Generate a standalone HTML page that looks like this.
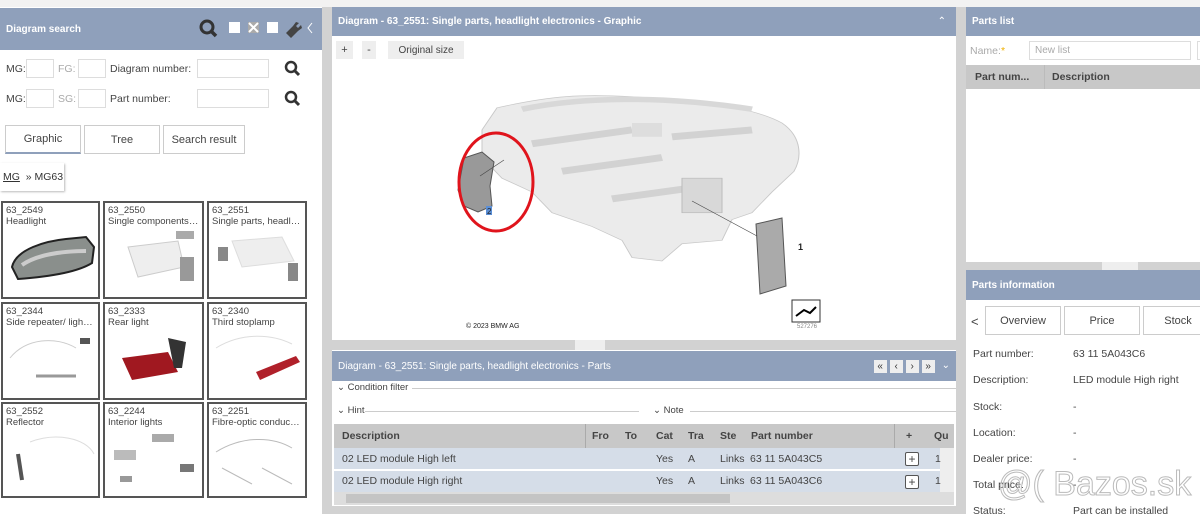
<!DOCTYPE html>
<html><head><meta charset="utf-8"><style>
*{box-sizing:border-box;margin:0;padding:0}
body{width:1200px;height:514px;overflow:hidden;background:#fff;font-family:"Liberation Sans",sans-serif;font-size:11px;color:#333;position:relative}
.a{position:absolute}
.hdr{background:#8fa0bb;color:#fff;font-weight:bold;font-size:10px;padding-left:6px;display:flex;align-items:center;white-space:nowrap}
.gut{background:#d2d2d2}
.inp{position:absolute;border:1px solid #ddd;background:#fff;height:19px}
.btn{position:absolute;border:1px solid #ccc;background:#fff;display:flex;align-items:center;justify-content:center;font-size:11px;color:#444;white-space:nowrap}
.th{position:absolute;border:2px solid #555;background:#fff;font-size:9.5px;color:#444;padding:2px 3px;line-height:11px;overflow:hidden;white-space:nowrap;text-overflow:ellipsis}
.lbl{position:absolute;font-size:10.5px;color:#444;white-space:nowrap}
</style></head><body>
<div class="a gut" style="left:322px;top:7px;width:10px;height:507px"></div>
<div class="a gut" style="left:956px;top:7px;width:10px;height:507px"></div>
<div class="a" style="left:0;top:0;width:1200px;height:7px;background:#f2f2f2"></div>

<!-- LEFT -->
<div class="a hdr" style="left:0;top:8px;width:322px;height:42px">Diagram search</div>
<svg class="a" style="left:198px;top:18px" width="120" height="22">
<circle cx="9" cy="9" r="6" fill="none" stroke="#333" stroke-width="3"/><line x1="13" y1="13" x2="18" y2="18" stroke="#333" stroke-width="3.5"/>
<rect x="31" y="4" width="11" height="11" fill="#fff"/>
<rect x="50" y="4" width="11" height="11" fill="#aaa"/><path d="M51 5l9 9M60 5l-9 9" stroke="#fff" stroke-width="2"/>
<rect x="69" y="4" width="11" height="11" fill="#fff"/>
<path d="M88 15l7-7 3-4 3 1-3 3 2 2 3-3 1 3-4 3-7 7z" fill="#444"/>
<path d="M114 5l-4 5 4 5" stroke="#fff" fill="none" stroke-width="1"/>
</svg>
<div class="lbl" style="left:6px;top:63px">MG:</div><div class="inp" style="left:26px;top:59px;width:28px"></div>
<div class="lbl" style="left:58px;top:63px;color:#aaa">FG:</div><div class="inp" style="left:78px;top:59px;width:28px"></div>
<div class="lbl" style="left:110px;top:63px">Diagram number:</div><div class="inp" style="left:197px;top:59px;width:72px"></div>
<div class="lbl" style="left:6px;top:93px">MG:</div><div class="inp" style="left:26px;top:89px;width:28px"></div>
<div class="lbl" style="left:58px;top:93px;color:#aaa">SG:</div><div class="inp" style="left:78px;top:89px;width:28px"></div>
<div class="lbl" style="left:110px;top:93px">Part number:</div><div class="inp" style="left:197px;top:89px;width:72px"></div>
<svg class="a" style="left:284px;top:60px" width="20" height="50"><g stroke="#333" fill="none"><circle cx="7" cy="7" r="5" stroke-width="2.5"/><line x1="10" y1="10" x2="15" y2="15" stroke-width="3"/><circle cx="7" cy="37" r="5" stroke-width="2.5"/><line x1="10" y1="40" x2="15" y2="45" stroke-width="3"/></g></svg>
<div class="btn" style="left:5px;top:125px;width:76px;height:29px;border-bottom:2px solid #8fa0bb">Graphic</div>
<div class="btn" style="left:84px;top:125px;width:76px;height:29px">Tree</div>
<div class="btn" style="left:163px;top:125px;width:82px;height:29px">Search result</div>
<div class="a" style="left:0;top:163px;width:64px;height:28px;box-shadow:1px 1px 2px #bbb;font-size:10.5px;padding:8px 3px;white-space:nowrap"><u>MG</u> &nbsp;» MG63</div>

<div class="th" style="left:1px;top:201px;width:99px;height:98px">63_2549<br>Headlight
<svg width="92" height="60" style="display:block"><path d="M6 40 C10 22 40 14 60 12 L80 10 88 20 86 36 C70 46 40 50 12 52Z" fill="#8a8f8c" stroke="#222" stroke-width="2"/><path d="M16 38C30 28 55 24 80 24" stroke="#ccc" fill="none" stroke-width="4"/></svg></div>
<div class="th" style="left:103px;top:201px;width:101px;height:98px">63_2550<br>Single components for...
<svg width="92" height="60" style="display:block"><path d="M20 20 L70 14 76 40 30 50Z" fill="#eee" stroke="#ccc"/><rect x="68" y="4" width="18" height="8" fill="#aaa"/><rect x="72" y="30" width="14" height="24" fill="#999"/></svg></div>
<div class="th" style="left:207px;top:201px;width:100px;height:98px">63_2551<br>Single parts, headlight...
<svg width="92" height="60" style="display:block"><path d="M20 14 L70 10 82 34 30 40Z" fill="#eee" stroke="#ddd"/><rect x="6" y="20" width="10" height="14" fill="#888"/><rect x="76" y="36" width="10" height="18" fill="#888"/></svg></div>
<div class="th" style="left:1px;top:302px;width:99px;height:98px">63_2344<br>Side repeater/ lights o...
<svg width="92" height="60" style="display:block"><path d="M4 30C20 10 50 8 70 20" stroke="#ccc" fill="none"/><rect x="74" y="10" width="10" height="6" fill="#555"/><path d="M30 48h40" stroke="#999" stroke-width="3"/></svg></div>
<div class="th" style="left:103px;top:302px;width:101px;height:98px">63_2333<br>Rear light
<svg width="92" height="60" style="display:block"><path d="M14 30 L60 24 70 44 24 52Z" fill="#a01820"/><path d="M60 10 L78 14 74 40 66 40Z" fill="#333"/></svg></div>
<div class="th" style="left:207px;top:302px;width:100px;height:98px">63_2340<br>Third stoplamp
<svg width="92" height="60" style="display:block"><path d="M4 20C30 4 60 6 80 16" stroke="#ddd" fill="none"/><path d="M44 44 L84 28 88 34 48 52Z" fill="#b0202a"/></svg></div>
<div class="th" style="left:1px;top:402px;width:99px;height:96px">63_2552<br>Reflector
<svg width="92" height="60" style="display:block"><path d="M24 14C50 4 80 10 88 26" stroke="#ddd" fill="none"/><path d="M12 26l4 26" stroke="#555" stroke-width="4"/></svg></div>
<div class="th" style="left:103px;top:402px;width:101px;height:96px">63_2244<br>Interior lights
<svg width="92" height="60" style="display:block"><rect x="6" y="22" width="22" height="10" fill="#bbb"/><rect x="44" y="6" width="22" height="8" fill="#aaa"/><rect x="72" y="36" width="14" height="8" fill="#777"/><rect x="12" y="48" width="12" height="6" fill="#999"/></svg></div>
<div class="th" style="left:207px;top:402px;width:100px;height:96px">63_2251<br>Fibre-optic conductor ...
<svg width="92" height="60" style="display:block"><path d="M4 24C30 8 60 8 80 20M10 40L40 56M50 40L80 56" stroke="#bbb" fill="none"/></svg></div>

<!-- CENTER -->
<div class="a hdr" style="left:332px;top:7px;width:624px;height:29px">Diagram - 63_2551: Single parts, headlight electronics - Graphic<span style="margin-left:auto;margin-right:10px;font-weight:normal">&#8963;</span></div>
<div class="btn" style="left:336px;top:41px;width:17px;height:18px;background:#eee;border:none">+</div>
<div class="btn" style="left:362px;top:41px;width:14px;height:18px;background:#eee;border:none">-</div>
<div class="btn" style="left:388px;top:41px;width:76px;height:18px;background:#eee;border:none;font-size:10px">Original size</div>
<svg class="a" style="left:332px;top:36px" width="624" height="304">
<g transform="translate(0,18) scale(1,0.69)">
<path d="M165 78 C220 60 250 58 300 62 C360 66 420 76 450 100 C470 120 470 150 462 170 L440 200 420 230 400 240 L390 270 350 275 330 300 300 295 290 270 260 250 220 230 200 200 170 180 150 150 150 110Z" fill="#ebebeb" stroke="#c8c8c8"/>
<path d="M190 80 C250 62 330 60 420 80" stroke="#d8d8d8" stroke-width="8" fill="none"/>
<path d="M200 130L300 110M230 170L330 150M280 210L380 190M340 120L420 110" stroke="#d2d2d2" stroke-width="10"/>
<rect x="300" y="100" width="30" height="20" fill="#ddd"/>
<rect x="350" y="180" width="40" height="50" fill="#d8d8d8" stroke="#bbb"/>
</g>
<path d="M132 122L150 116 162 126 158 150 160 170 146 176 132 170 126 154Z" fill="#999" stroke="#555"/>
<path d="M424 188L450 182 454 250 428 258Z" fill="#aaa" stroke="#555"/>
<line x1="360" y1="165" x2="425" y2="200" stroke="#444" stroke-width=".6"/>
<line x1="148" y1="140" x2="172" y2="124" stroke="#444" stroke-width=".6"/>
<text x="466" y="214" font-size="9" font-weight="bold" fill="#222" font-family="Liberation Sans">1</text>
<rect x="154" y="170" width="6" height="9" fill="#5b8fd6"/>
<text x="155" y="178" font-size="8" fill="#222" font-family="Liberation Sans">2</text>
<ellipse cx="164" cy="146" rx="37" ry="49" fill="none" stroke="#e0141c" stroke-width="3"/>
<rect x="460" y="264" width="28" height="22" fill="#fff" stroke="#333"/><path d="M464 280l8-6 6 3 6-6" stroke="#000" fill="none" stroke-width="2"/>
<text x="465" y="292" font-size="6" fill="#888" font-family="Liberation Sans">527276</text>
<text x="134" y="292" font-size="7" fill="#222" font-family="Liberation Sans">© 2023 BMW AG</text>
</svg>
<div class="a gut" style="left:332px;top:340px;width:624px;height:10px"></div>
<div class="a" style="left:575px;top:340px;width:30px;height:10px;background:#eee"></div>
<div class="a hdr" style="left:332px;top:351px;width:624px;height:30px;font-weight:normal">Diagram - 63_2551: Single parts, headlight electronics - Parts
<span style="margin-left:auto;display:flex;gap:3px;margin-right:6px">
<span style="background:#eee;color:#333;width:13px;height:13px;font-size:10px;text-align:center;line-height:13px">«</span><span style="background:#eee;color:#333;width:13px;height:13px;font-size:10px;text-align:center;line-height:13px">‹</span><span style="background:#eee;color:#333;width:13px;height:13px;font-size:10px;text-align:center;line-height:13px">›</span><span style="background:#eee;color:#333;width:13px;height:13px;font-size:10px;text-align:center;line-height:13px">»</span><span style="color:#fff;margin-left:4px">⌄</span></span></div>
<div class="lbl" style="left:337px;top:382px;font-size:9.5px">⌄ Condition filter</div><div class="a" style="left:412px;top:388px;width:544px;height:1px;background:#ccc"></div>
<div class="lbl" style="left:337px;top:405px;font-size:9.5px">⌄ Hint</div><div class="a" style="left:365px;top:411px;width:274px;height:1px;background:#ccc"></div>
<div class="lbl" style="left:653px;top:405px;font-size:9.5px">⌄ Note</div><div class="a" style="left:690px;top:411px;width:266px;height:1px;background:#ccc"></div>
<div class="a" style="left:334px;top:424px;width:620px;height:24px;background:#c8c8c8"></div>
<div class="a" style="left:334px;top:448px;width:606px;height:22px;background:#d5dde8;border-bottom:1px solid #fff"></div>
<div class="a" style="left:334px;top:471px;width:606px;height:21px;background:#d5dde8"></div>
<div class="a" style="left:334px;top:492px;width:620px;height:13px;background:#ddd"></div>
<div class="a" style="left:346px;top:494px;width:384px;height:9px;background:#c4c4c4"></div>
<div class="a" style="left:940px;top:448px;width:14px;height:44px;background:#eee"></div>
<div class="lbl" style="left:342px;top:430px;font-weight:bold">Description</div>
<div class="lbl" style="left:592px;top:430px;font-weight:bold">Fro</div>
<div class="lbl" style="left:625px;top:430px;font-weight:bold">To</div>
<div class="lbl" style="left:656px;top:430px;font-weight:bold">Cat</div>
<div class="lbl" style="left:688px;top:430px;font-weight:bold">Tra</div>
<div class="lbl" style="left:720px;top:430px;font-weight:bold">Ste</div>
<div class="lbl" style="left:751px;top:430px;font-weight:bold">Part number</div>
<div class="lbl" style="left:906px;top:430px;font-weight:bold">+</div>
<div class="lbl" style="left:934px;top:430px;font-weight:bold">Qu</div>
<div class="a" style="left:585px;top:424px;width:1px;height:24px;background:#aaa"></div>
<div class="a" style="left:894px;top:424px;width:1px;height:24px;background:#aaa"></div>
<div class="lbl" style="left:342px;top:453px">02 LED module High left</div>
<div class="lbl" style="left:656px;top:453px">Yes</div><div class="lbl" style="left:688px;top:453px">A</div><div class="lbl" style="left:720px;top:453px">Links</div><div class="lbl" style="left:750px;top:453px">63 11 5A043C5</div>
<div class="btn" style="left:905px;top:452px;width:14px;height:14px;border-color:#555;border-radius:2px;font-size:12px">+</div><div class="lbl" style="left:935px;top:453px">1</div>
<div class="lbl" style="left:342px;top:475px">02 LED module High right</div>
<div class="lbl" style="left:656px;top:475px">Yes</div><div class="lbl" style="left:688px;top:475px">A</div><div class="lbl" style="left:720px;top:475px">Links</div><div class="lbl" style="left:750px;top:475px">63 11 5A043C6</div>
<div class="btn" style="left:905px;top:475px;width:14px;height:14px;border-color:#555;border-radius:2px;font-size:12px">+</div><div class="lbl" style="left:935px;top:475px">1</div>
<div class="a gut" style="left:332px;top:506px;width:624px;height:8px"></div>

<!-- RIGHT -->
<div class="a hdr" style="left:966px;top:7px;width:234px;height:29px">Parts list</div>
<div class="lbl" style="left:970px;top:45px;color:#aaa">Name:<span style="color:#f0b000">*</span></div>
<div class="inp" style="left:1029px;top:41px;width:162px;height:19px;color:#aaa;font-size:10px;padding:3px 5px">New list</div>
<div class="inp" style="left:1197px;top:41px;width:10px"></div>
<div class="a" style="left:966px;top:65px;width:234px;height:24px;background:#c8c8c8"></div>
<div class="lbl" style="left:975px;top:71px;font-weight:bold">Part num...</div>
<div class="a" style="left:1044px;top:65px;width:1px;height:24px;background:#bbb"></div>
<div class="lbl" style="left:1052px;top:71px;font-weight:bold">Description</div>
<div class="a gut" style="left:966px;top:262px;width:234px;height:8px"></div>
<div class="a" style="left:1102px;top:262px;width:36px;height:8px;background:#eee"></div>
<div class="a hdr" style="left:966px;top:270px;width:234px;height:30px">Parts information</div>
<div class="lbl" style="left:971px;top:314px;font-size:13px">&lt;</div>
<div class="btn" style="left:985px;top:306px;width:76px;height:29px">Overview</div>
<div class="btn" style="left:1064px;top:306px;width:76px;height:29px">Price</div>
<div class="btn" style="left:1143px;top:306px;width:70px;height:29px">Stock</div>
<div class="lbl" style="left:973px;top:348px">Part number:</div><div class="lbl" style="left:1073px;top:348px">63 11 5A043C6</div>
<div class="lbl" style="left:973px;top:374px">Description:</div><div class="lbl" style="left:1073px;top:374px">LED module High right</div>
<div class="lbl" style="left:973px;top:401px">Stock:</div><div class="lbl" style="left:1073px;top:401px">-</div>
<div class="lbl" style="left:973px;top:427px">Location:</div><div class="lbl" style="left:1073px;top:427px">-</div>
<div class="lbl" style="left:973px;top:453px">Dealer price:</div><div class="lbl" style="left:1073px;top:453px">-</div>
<div class="lbl" style="left:973px;top:479px">Total price:</div><div class="lbl" style="left:1073px;top:479px">-</div>
<div class="lbl" style="left:973px;top:505px">Status:</div><div class="lbl" style="left:1073px;top:505px">Part can be installed</div>
<div class="a" style="left:998px;top:466px;font-size:34px;color:transparent;-webkit-text-stroke:1px #bbb;white-space:nowrap;line-height:36px">@( Bazos.sk</div>
</body></html>
